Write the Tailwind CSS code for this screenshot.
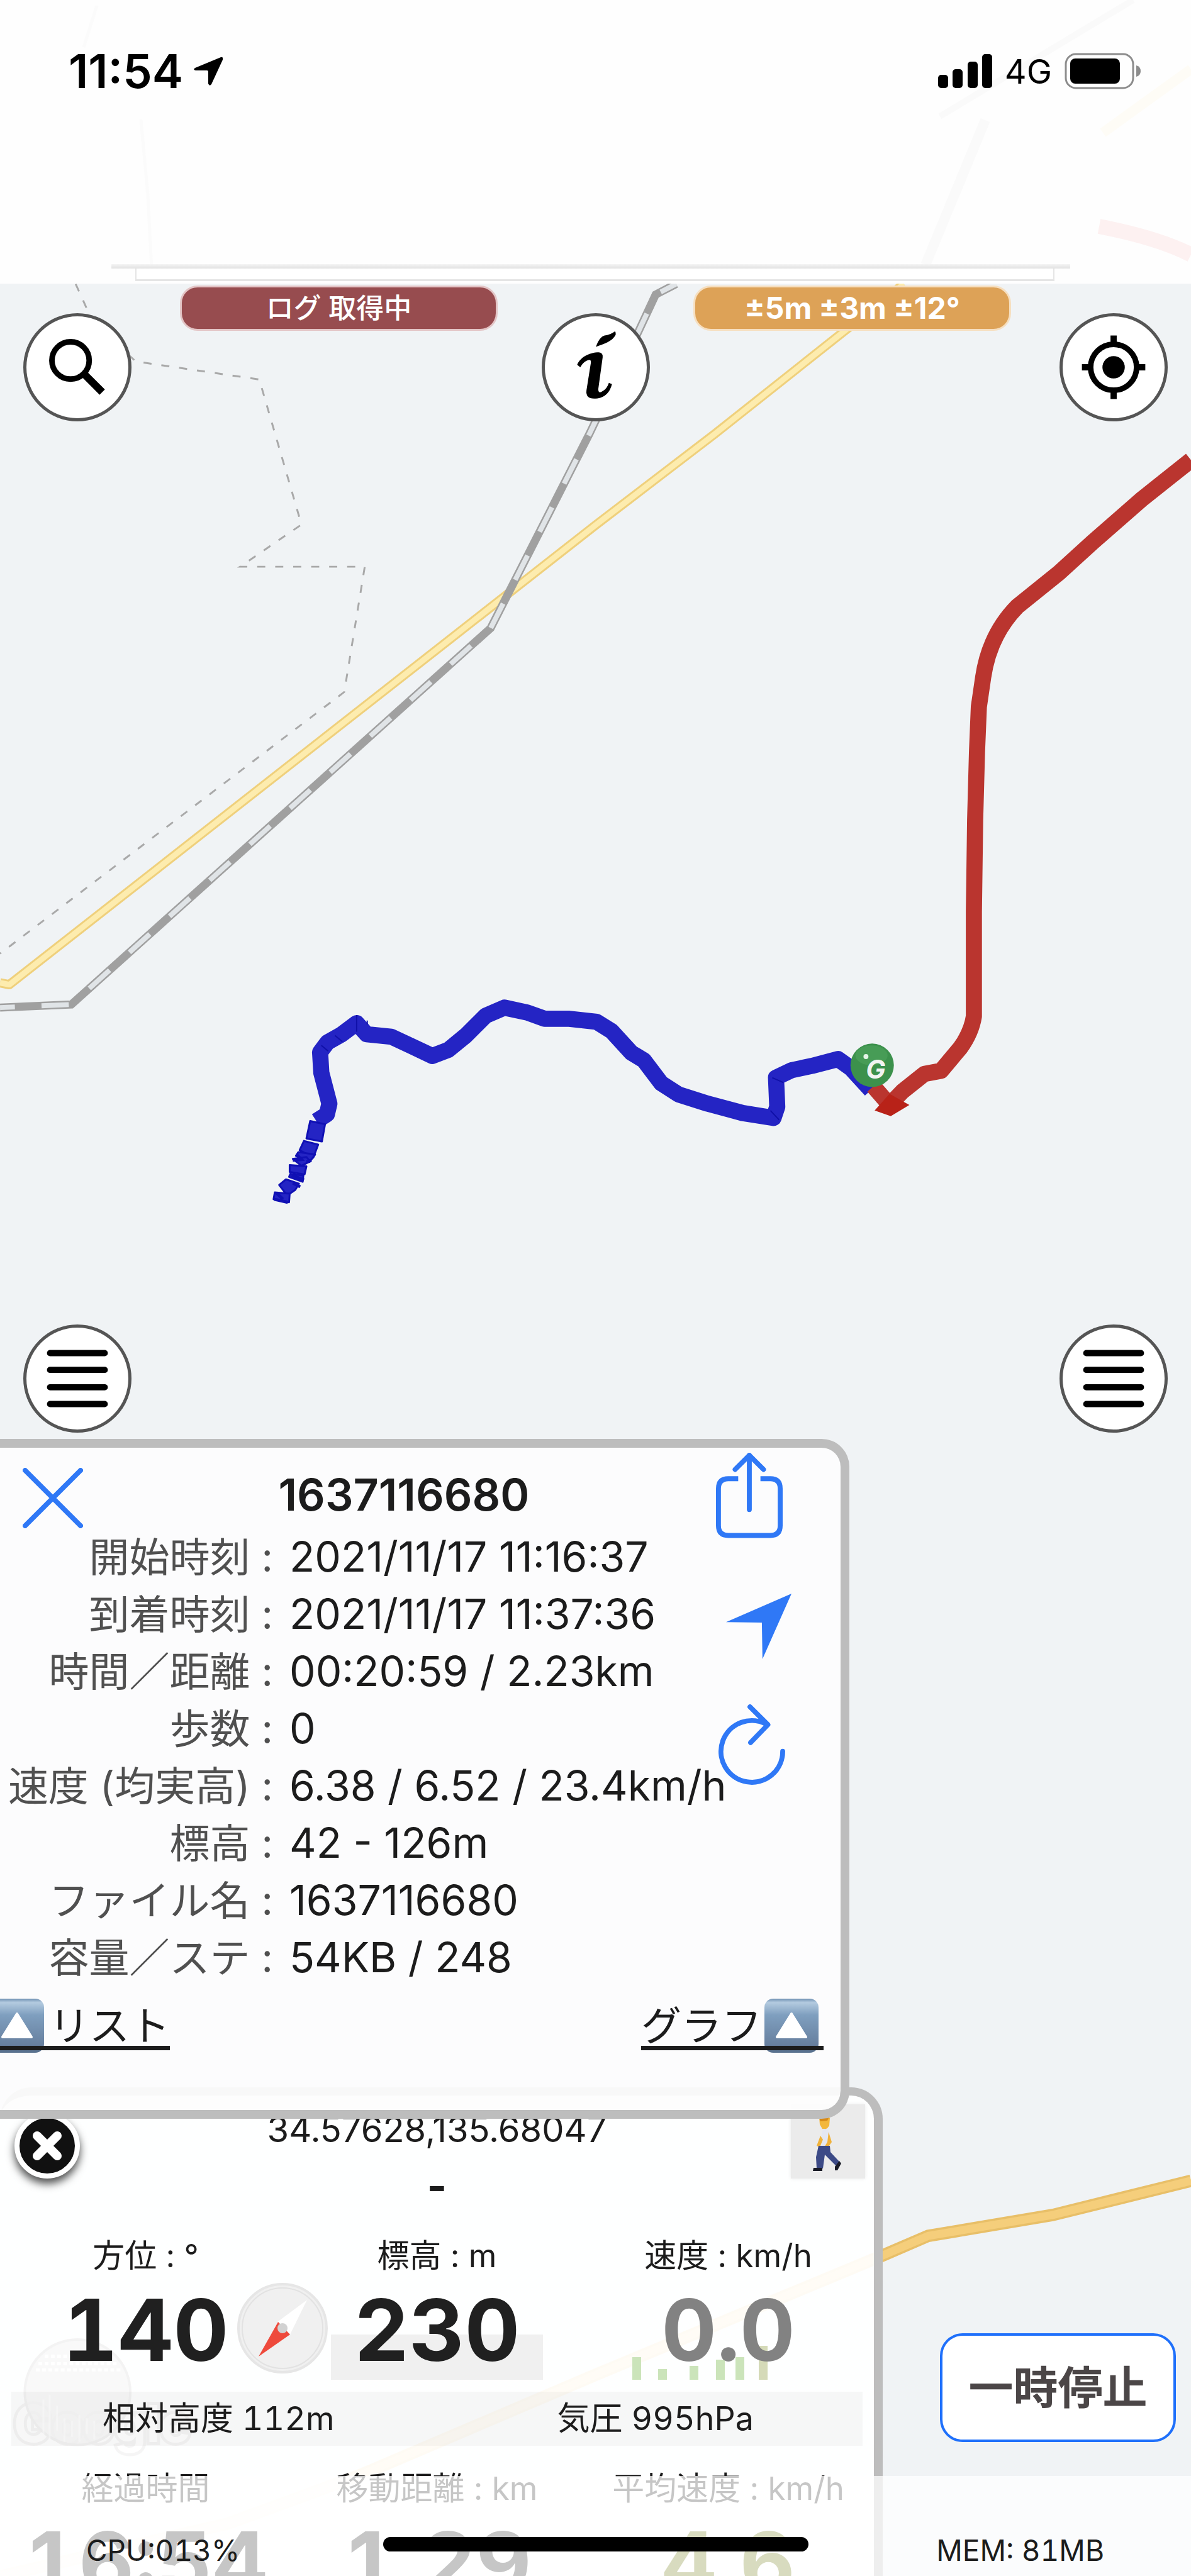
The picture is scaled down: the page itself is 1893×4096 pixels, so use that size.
<!DOCTYPE html>
<html lang="ja">
<head>
<meta charset="utf-8">
<title>ログ 取得中</title>
<script src="https://cdn.jsdelivr.net/npm/@tailwindcss/browser@4"></script>
</head>
<body class="bg-[#f0f3f5]">
<div class="relative flex h-screen w-full flex-col overflow-hidden bg-[#f0f3f5] font-['Inter','Noto_Sans_CJK_JP',sans-serif] text-[#1c1c1c]">

  <!-- Map canvas -->
  <svg class="absolute inset-x-0 top-0 w-full" viewBox="0 0 1920 4155" fill="none" aria-hidden="true">
    <path d="M122 458L150 520L219 583L418 612L486 846L387 914H588L555 1116L0 1538" stroke="#a9a9a9" stroke-width="3" stroke-dasharray="13 16"/>
    <g stroke-linejoin="round">
      <path d="M0 1585L15 1588L960 847L1152 700L1457 458" stroke="#efd07c" stroke-width="15"/>
      <path d="M0 1585L15 1588L960 847L1152 700L1457 458" stroke="#fdecae" stroke-width="9"/>
    </g>
    <path d="M0 1625L115 1620L791 1013L950 700L1030 533L1057 475L1090 458" stroke="#a0a0a0" stroke-width="13"/>
    <path d="M0 1625L115 1620L791 1013L950 700L1030 533L1057 475L1090 458" stroke="#e0e4e7" stroke-width="8" stroke-dasharray="44 43" stroke-dashoffset="20"/>
    <path d="M1920 3517L1698 3572L1496 3606L1424 3637L960 3830L585 3990L367 4070L0 4155" stroke="#e8bf68" stroke-width="20" stroke-linejoin="round"/>
    <path d="M1920 3517L1698 3572L1496 3606L1424 3637L960 3830L585 3990L367 4070L0 4155" stroke="#f5ce7b" stroke-width="13" stroke-linejoin="round"/>
    <!-- Recorded tracks -->
    <path d="M1404 1758L1372 1723L1351 1708L1309 1719L1276 1726L1251 1738L1253 1785L1247 1803L1197 1795L1141 1780L1094 1765L1066 1747L1038 1710L1018 1698L986 1663L962 1648L918 1643L878 1643L850 1633L813 1625L783 1638L751 1670L723 1693L697 1703L663 1687L631 1672L591 1668L575 1650L551 1668L528 1681L516 1697L518 1730L531 1780L527 1797L510 1808" stroke="#2424c4" stroke-width="26" stroke-linejoin="round"/>
    <g fill="#2424c4" stroke="#1010b4" stroke-width="3" stroke-linejoin="round">
      <path d="M500 1808L524 1813L519 1841L494 1836Z"/>
      <path d="M490 1840L513 1846L505 1867L483 1855Z"/>
      <path d="M481 1858L508 1862L499 1874L477 1864Z"/>
      <path d="M472 1869L494 1866L500 1873L486 1880Z"/>
      <path d="M467 1879L494 1881L491 1894L467 1890Z"/>
      <path d="M468 1893L489 1896L488 1906L466 1898Z"/>
      <path d="M461 1902L482 1909L476 1919L463 1928L450 1911Z"/>
      <path d="M443 1923L467 1925L466 1939L441 1934Z"/>
    </g>
    <path d="M478 1862L486 1870L472 1871M494 1874L502 1871M470 1895L490 1903M472 1908L484 1914M442 1934L464 1939M446 1924L456 1934" stroke="#1010b4" stroke-width="5"/>
    <path d="M575 1637V1664M540 1670L552 1680M518 1686L529 1695M592 1646V1652M1245 1738L1263 1746M1242 1791L1256 1806" stroke="#1010a8" stroke-width="2"/>
    <path d="M1920 742L1842 804L1762 874L1707 924L1640 978Q1595 1024 1585 1092L1578 1140L1575 1213L1572 1323L1570 1470L1570 1639Q1566 1665 1548 1690L1517 1727L1490 1732L1455 1760L1434 1782L1408 1752" stroke="#ba352f" stroke-width="26" stroke-linejoin="round"/>
    <path d="M1410 1791L1434 1764L1466 1782L1436 1800Z" fill="#b82218"/>
    <circle cx="1406" cy="1718" r="35" fill="#3c914c"/>
    <ellipse cx="1405" cy="1702" rx="26" ry="16" fill="#4fa45d" opacity=".6"/>
    <circle cx="1396" cy="1704" r="4" fill="#e5f4e7"/>
    <text x="1396" y="1739" font-size="42" font-weight="700" font-style="italic" font-family="Inter" fill="#f2f4f2">G</text>
    <!-- Map watermark under the data panel -->
    <text x="22" y="3938" font-size="82" font-weight="700" font-family="Inter" fill="#fff" stroke="#777" stroke-width="10" paint-order="stroke">Google</text>
    <circle cx="125" cy="3858" r="85" fill="#999" fill-opacity=".8" stroke="#555" stroke-width="4"/>
    <path d="M62 3812H190M58 3822H194M72 3800H178" stroke="#fff" stroke-width="5" stroke-dasharray="6 4"/>
    <path d="M70 3930V3870M80 3936V3862M92 3920V3880M104 3938V3900M116 3930V3905M128 3938V3895M140 3925V3900M152 3934V3905" stroke="#fff" stroke-opacity=".6" stroke-width="3"/>
  </svg>

  <!-- Status bar -->
  <header class="relative flex h-[451px] shrink-0 flex-col bg-[#fefefe]">
    <svg class="absolute inset-0 h-full w-full" viewBox="0 0 1893 451" fill="none" aria-hidden="true">
      <path d="M1801 0L1494 185" stroke="#fafafa" stroke-width="10"/>
      <path d="M1566 191L1471 421" stroke="#fafafa" stroke-width="16"/>
      <path d="M1893 110L1753 211" stroke="#fefcf6" stroke-width="16"/>
      <path d="M1747 360Q1840 378 1893 405" stroke="#fdf1f1" stroke-width="24"/>
      <path d="M154 9L133 75M224 190L235 310L241 428" stroke="#fbfbfb" stroke-width="5"/>
    </svg>
    <div class="relative flex h-[226px] items-center justify-between pr-[79px] pl-[109px] text-black">
      <div class="flex items-center gap-4">
        <span class="text-[74px] font-semibold">11:54</span>
        <svg class="h-[47px] w-[48px]" viewBox="0 0 48 47" aria-hidden="true"><path d="M44 1Q48 0 47 5L29 44Q26 48 24 43V24Q24 22 22 22H4Q-1 21 3 18Z"/></svg>
      </div>
      <div class="flex items-center gap-5">
        <svg class="h-[54px] w-[86px]" viewBox="0 0 86 54" aria-hidden="true"><rect y="33" width="16" height="21" rx="5"/><rect x="23" y="24" width="16" height="30" rx="5"/><rect x="47" y="12" width="16" height="42" rx="5"/><rect x="70" width="16" height="54" rx="5"/></svg>
        <span class="text-[54px]">4G</span>
        <svg class="h-[58px] w-[122px]" viewBox="0 0 122 58" aria-hidden="true"><rect x="2" y="2" width="107" height="54" rx="16" fill="none" stroke="#8c8c8c" stroke-width="3"/><rect x="9" y="9" width="79" height="40" rx="8"/><path d="M114 20Q121 22 121 29Q121 36 114 38Z" fill="#8c8c8c"/></svg>
      </div>
    </div>
    <div class="relative mt-auto mr-[192px] ml-[177px] h-[7px] bg-linear-to-b from-[#f4f4f4] to-[#e2e2e2]"></div>
    <div class="relative mr-[217px] mb-1 ml-[215px] h-[20px] border-x-2 border-b-[3px] border-[#e5e5e5] bg-white"></div>
  </header>

  <!-- Map controls -->
  <main class="relative flex min-h-0 flex-1 flex-col">
    <div class="mt-[3px] flex justify-center gap-[311px] text-white">
      <div class="flex h-[72px] w-[505px] items-center justify-center rounded-[28px] border-[3px] border-[#e3c5c6] bg-[#974c4f] text-[44px] font-medium">ログ 取得中</div>
      <div class="flex h-[72px] w-[505px] items-center justify-center rounded-[28px] border-[3px] border-[#f6dfc0] bg-[#dda257] text-[48px] font-bold">±5m ±3m ±12°</div>
    </div>
    <div class="-mt-[28px] flex justify-between px-[37px]">
      <button type="button" aria-label="検索" class="size-[172px] rounded-full border-[5px] border-[#555] bg-white">
        <svg viewBox="5 5 164 164" fill="none" stroke="#000" aria-hidden="true"><circle cx="76" cy="76" r="30" stroke-width="9"/><path d="M97 97L127 127" stroke-width="12"/></svg>
      </button>
      <button type="button" aria-label="情報" class="size-[172px] rounded-full border-[5px] border-[#555] bg-white">
        <svg viewBox="5 5 164 164" aria-hidden="true"><path d="M118 29Q121 34 116 39Q110 47 87 54Q93 38 101 36Q110 35 118 29Z"/><path d="M57 83C62 71 76 63 92 63Q99 64 98 71L91 122Q91 130 97 126Q105 122 108 112L113 114Q108 134 90 137Q70 140 72 124L79 80Q80 73 73 76Q66 79 62 87Z"/></svg>
      </button>
      <button type="button" aria-label="現在地" class="size-[172px] rounded-full border-[5px] border-[#555] bg-white">
        <svg viewBox="5 5 164 164" fill="none" stroke="#000" aria-hidden="true"><circle cx="87" cy="87" r="37" stroke-width="9"/><circle cx="87" cy="87" r="18" fill="#000" stroke="none"/><path d="M87 36V52M87 122V138M36 87H52M122 87H138" stroke-width="10"/></svg>
      </button>
    </div>
    <div class="mt-auto mb-[10px] flex justify-between px-[37px]">
      <button type="button" aria-label="左メニュー" class="size-[172px] rounded-full border-[5px] border-[#555] bg-white">
        <svg viewBox="5 5 164 164" stroke="#000" stroke-width="10" stroke-linecap="round" aria-hidden="true"><path d="M43 46H131M43 73H131M43 101H131M43 128H131"/></svg>
      </button>
      <button type="button" aria-label="右メニュー" class="size-[172px] rounded-full border-[5px] border-[#555] bg-white">
        <svg viewBox="5 5 164 164" stroke="#000" stroke-width="10" stroke-linecap="round" aria-hidden="true"><path d="M43 46H131M43 73H131M43 101H131M43 128H131"/></svg>
      </button>
    </div>
  </main>

  <!-- Log detail panel -->
  <section class="relative z-10 flex h-[1081px] w-[1350px] shrink-0 flex-col rounded-r-[44px] border-y-[14px] border-r-[14px] border-[#bdbdbd] bg-[#fdfdfd]/92 bg-clip-padding">
    <div class="flex">
      <div class="min-w-0 flex-1">
        <div class="flex h-[128px] items-center pt-5 pl-9">
          <button type="button" aria-label="閉じる" class="mt-3 size-[96px] shrink-0">
            <svg viewBox="0 0 96 96" fill="none" stroke="#2f78f6" stroke-width="8" stroke-linecap="round" aria-hidden="true"><path d="M4 4L92 92M92 4L4 92"/></svg>
          </button>
          <h1 class="w-[1020px] shrink-0 text-center text-[70px] font-semibold">1637116680</h1>
        </div>
        <dl class="grid auto-rows-[91px] grid-cols-[434px_1fr] items-center gap-x-[26px] text-[66px] whitespace-nowrap">
          <dt class="text-right text-[64px] text-[#505050]">開始時刻 :</dt><dd>2021/11/17 11:16:37</dd>
          <dt class="text-right text-[64px] text-[#505050]">到着時刻 :</dt><dd>2021/11/17 11:37:36</dd>
          <dt class="text-right text-[64px] text-[#505050]">時間／距離 :</dt><dd>00:20:59 / 2.23km</dd>
          <dt class="text-right text-[64px] text-[#505050]">歩数 :</dt><dd>0</dd>
          <dt class="text-right text-[64px] text-[#505050]">速度 (均実高) :</dt><dd>6.38 / 6.52 / 23.4km/h</dd>
          <dt class="text-right text-[64px] text-[#505050]">標高 :</dt><dd>42 - 126m</dd>
          <dt class="text-right text-[64px] text-[#505050]">ファイル名 :</dt><dd>1637116680</dd>
          <dt class="text-right text-[64px] text-[#505050]">容量／ステ :</dt><dd>54KB / 248</dd>
        </dl>
      </div>
      <div class="flex w-[206px] flex-col pt-2 pl-1 text-[#2f78f6]">
        <button type="button" aria-label="共有" class="ml-1 h-[136px] w-[106px]">
          <svg viewBox="0 0 108 138" fill="none" stroke="currentColor" stroke-width="8" stroke-linecap="round" stroke-linejoin="round" aria-hidden="true"><path d="M36 42H20Q4 42 4 58V118Q4 134 20 134H88Q104 134 104 118V58Q104 42 88 42H72" stroke-linecap="butt"/><path d="M54 92V4M31 27L54 4L77 27"/></svg>
        </button>
        <button type="button" aria-label="移動" class="mt-[88px] ml-5 h-[104px] w-[104px]">
          <svg viewBox="0 0 106 106" fill="currentColor" aria-hidden="true"><path d="M106 0L0 46L58 47L59 106Z"/></svg>
        </button>
        <button type="button" aria-label="更新" class="mt-[72px] ml-2 h-[130px] w-[106px]">
          <svg viewBox="0 0 108 132" fill="none" stroke="currentColor" stroke-width="8" stroke-linecap="round" stroke-linejoin="round" aria-hidden="true"><path d="M104 76A50 50 0 1 1 79 33"/><path d="M51 4L80 33L52 62"/></svg>
        </button>
      </div>
    </div>
    <div class="mt-5 flex justify-between pr-[27px] text-[64px] text-[#1c1c1c]">
      <a href="#list" class="relative -ml-[20px] flex h-[86px] items-center after:absolute after:inset-x-0 after:bottom-1 after:h-[7px] after:bg-[#1c1c1c]">
        <svg class="mr-2 ml-1 size-[86px]" viewBox="0 0 86 86" aria-hidden="true"><defs><linearGradient id="tile" x2="0" y2="1"><stop stop-color="#6f90b2"/><stop offset=".07" stop-color="#b4cbe0"/><stop offset=".3" stop-color="#7f9fbf"/><stop offset=".9" stop-color="#657d9c"/><stop offset="1" stop-color="#566f8c"/></linearGradient></defs><rect width="86" height="86" rx="14" fill="url(#tile)"/><path d="M43 24L66 61H20Z" fill="#fff" stroke="#fff" stroke-width="4" stroke-linejoin="round"/></svg>リスト
      </a>
      <a href="#graph" class="relative flex h-[86px] items-center after:absolute after:inset-x-0 after:bottom-1 after:h-[7px] after:bg-[#1c1c1c]">グラフ
        <svg class="mr-2 ml-1 size-[86px]" viewBox="0 0 86 86" aria-hidden="true"><rect width="86" height="86" rx="14" fill="url(#tile)"/><path d="M43 24L66 61H20Z" fill="#fff" stroke="#fff" stroke-width="4" stroke-linejoin="round"/></svg>
      </a>
    </div>
  </section>

  <!-- Live data panel -->
  <section class="relative -mt-[50px] h-[777px] w-[1403px] shrink-0 overflow-hidden rounded-t-[50px] border-t-[13px] border-r-[14px] border-[#bdbdbd] bg-white/93 bg-clip-padding whitespace-nowrap">
    <!-- Elevation trace, speed bars and compass; origin is the panel's inner corner -->
    <svg class="absolute top-0 left-0 h-[764px] w-[1389px]" viewBox="0 0 1389 764" aria-hidden="true">
      <rect x="526" y="380" width="337" height="72" fill="#f0f0f0"/>
      <path d="M1005 452V416H1019V452ZM1046 452V435H1060V452ZM1096 452V430H1110V452ZM1138 452V420H1152V452ZM1169 452V416H1183V452Z" fill="#cbe4ba"/>
      <path d="M1206 452V398H1220V452Z" fill="#d5dab8"/>
      <circle cx="449" cy="370" r="70" fill="#f0f0f0" stroke="#e6e6e6" stroke-width="4"/>
      <circle cx="449" cy="370" r="64" fill="none" stroke="#e2e2e2" stroke-width="2"/>
      <path d="M488 325L461 380L441 360Z" fill="#fff"/>
      <path d="M411 415L442 360L461 380Z" fill="#ee4a3c"/>
      <circle cx="449" cy="370" r="8" fill="#d2d2d2"/>
    </svg>
    <button type="button" aria-label="パネルを閉じる" class="absolute top-[28px] left-[23px] size-[104px] rounded-full border-[8px] border-white bg-[#111] shadow-[0_8px_14px_rgba(0,0,0,0.7)]">
      <svg viewBox="0 0 88 88" stroke="#fff" stroke-width="14" stroke-linecap="round" aria-hidden="true"><path d="M28 28L60 60M60 28L28 60"/></svg>
    </button>
    <div class="absolute top-[14px] right-[14px] h-[118px] w-[118px] bg-[#ebebeb] shadow-[0_0_6px_#ebebeb]">
      <svg viewBox="0 0 118 118" aria-label="歩行" role="img">
        <path d="M45 20Q54 13 62 22L61 34Q56 42 50 39L46 32Z" fill="#f3b73b"/>
        <path d="M45 22Q52 14 61 20L58 26L47 27Z" fill="#d78a18"/>
        <path d="M51 39Q61 38 62 48L62 66H46Q47 52 51 39Z" fill="#e4e7f1"/>
        <path d="M60 44L65 60L56 73L52 70L58 60Z" fill="#f0b23c"/>
        <path d="M47 50L41 66L46 68L51 56Z" fill="#f0b23c"/>
        <path d="M44 66H62L63 76L77 91L72 98L54 80L51 102H41L40 84Z" fill="#3c4a86"/>
        <path d="M36 101H50V106H35ZM70 99L77 90L80 94L74 105H70Z" fill="#191b26"/>
      </svg>
    </div>
    <p class="relative mt-[14px] h-[80px] text-center text-[56px] leading-[80px]">34.57628,135.68047</p>
    <p class="relative mt-[14px] h-[70px] text-center text-[68px] leading-[70px] font-bold">-</p>
    <div class="relative mt-[47px] grid h-[60px] grid-cols-3 text-center text-[51px] leading-[60px]">
      <span>方位 : °</span><span>標高 : m</span><span>速度 : km/h</span>
    </div>
    <div class="relative mt-[15px] grid h-[146px] grid-cols-3 text-center text-[136px] leading-[146px] font-bold text-[#202020] tabular-nums">
      <span>140</span><span>230</span><span class="text-[#828282]">0.0</span>
    </div>
    <div class="relative mx-[18px] mt-[25px] h-[86px] bg-black/3 text-center text-[52px] leading-[86px] tabular-nums">
      <div class="-mx-[18px] grid grid-cols-2"><span>相対高度 112m</span><span>気圧 995hPa</span></div>
    </div>
    <div class="relative mt-[38px] grid h-[60px] grid-cols-3 text-center text-[51px] leading-[60px]">
      <span>経過時間</span><span>移動距離 : km</span><span>平均速度 : km/h</span>
    </div>
    <div class="relative mt-[15px] grid h-[146px] grid-cols-3 text-center text-[136px] leading-[146px] font-bold tabular-nums">
      <span>16:54</span><span>1.29</span><span class="text-[#636f00]">4.6</span>
    </div>
  </section>

  <button type="button" class="absolute right-6 bottom-[213px] h-[173px] w-[375px] rounded-[36px] border-4 border-[#1f70fb] bg-white text-[71px] font-bold text-[#4b4647]">一時停止</button>

  <footer class="absolute inset-x-0 bottom-0 z-20 flex h-[159px] flex-col justify-end bg-white/75 text-[46px]">
    <div class="flex h-[82px] items-center justify-between pr-[138px] pl-[137px] tabular-nums">
      <span>CPU:013%</span><span>MEM: 81MB</span>
    </div>
    <div class="absolute top-[97px] left-1/2 h-[23px] w-[676px] -translate-x-1/2 rounded-full bg-black"></div>
  </footer>
</div>
</body>
</html>
